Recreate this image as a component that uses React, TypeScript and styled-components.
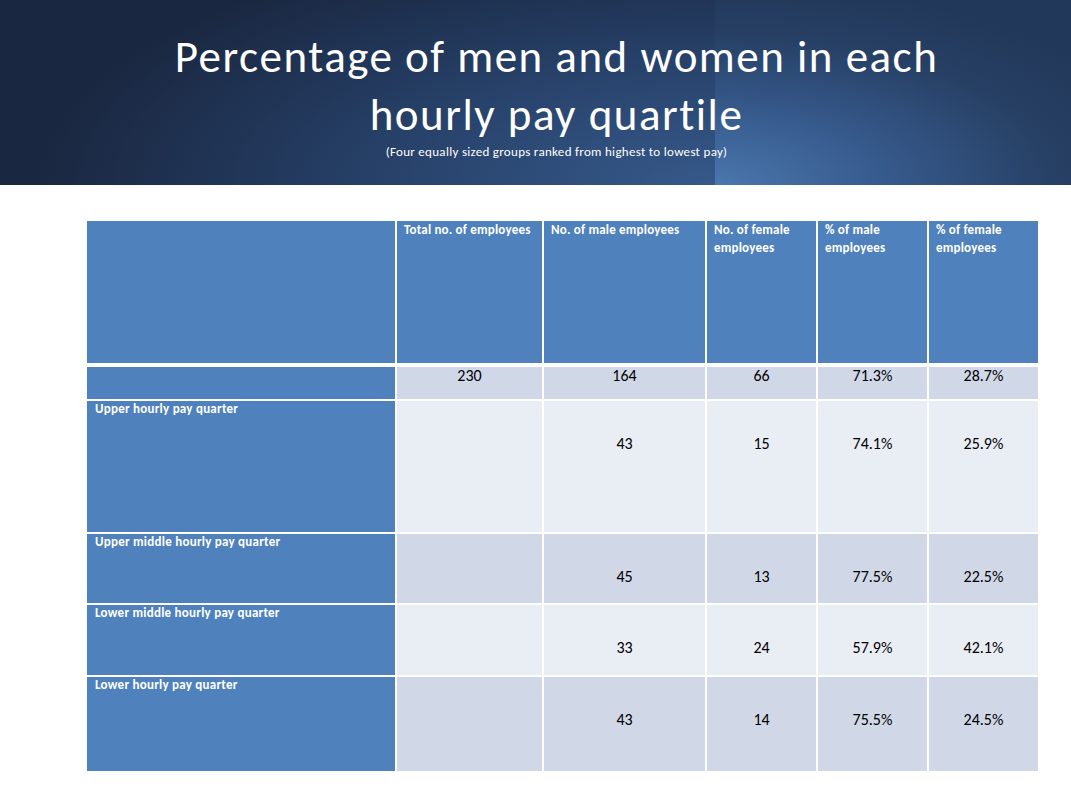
import React from 'react';
import styled, { createGlobalStyle } from 'styled-components';

const GlobalStyle = createGlobalStyle`
  body {
    margin: 0;
    background: #ffffff;
    font-family: Calibri, Carlito, Lato, 'Open Sans', sans-serif;
  }
`;

type Quarter = {
  label: string;
  total: string;
  male: string;
  female: string;
  malePct: string;
  femalePct: string;
  height: number;
};

const columns = [
  'Total no. of employees',
  'No. of male employees',
  'No. of female employees',
  '% of male employees',
  '% of female employees',
];

const rows: Quarter[] = [
  { label: '', total: '230', male: '164', female: '66', malePct: '71.3%', femalePct: '28.7%', height: 32 },
  { label: 'Upper hourly pay quarter', total: '', male: '43', female: '15', malePct: '74.1%', femalePct: '25.9%', height: 131 },
  { label: 'Upper middle hourly pay quarter', total: '', male: '45', female: '13', malePct: '77.5%', femalePct: '22.5%', height: 69 },
  { label: 'Lower middle hourly pay quarter', total: '', male: '33', female: '24', malePct: '57.9%', femalePct: '42.1%', height: 70 },
  { label: 'Lower hourly pay quarter', total: '', male: '43', female: '14', malePct: '75.5%', femalePct: '24.5%', height: 94 },
];

const App: React.FC = () => {
  return (
    <Page>
      <GlobalStyle />
      <Banner>
        <Title>
          Percentage of men and women in each
          <br />
          hourly pay quartile
        </Title>
        <Subtitle>(Four equally sized groups ranked from highest to lowest pay)</Subtitle>
      </Banner>

      <Table>
        <HeadRow>
          <LabelCell />
          {columns.map((c) => (
            <HeadCell key={c}>{c}</HeadCell>
          ))}
        </HeadRow>
        {rows.map((r, i) => (
          <BodyRow key={i} $height={r.height}>
            <LabelCell>{r.label}</LabelCell>
            {[r.total, r.male, r.female, r.malePct, r.femalePct].map((v, j) => (
              <DataCell key={j} $shade={i % 2 === 0} $top={i === 0 ? 0 : 34}>
                {v}
              </DataCell>
            ))}
          </BodyRow>
        ))}
      </Table>
    </Page>
  );
};

const Page = styled.div`
  min-height: 803px;
  background: #ffffff;
`;

const Banner = styled.header`
  height: 185px;
  box-sizing: border-box;
  padding: 28px 0 0 42px;
  text-align: center;
  color: #ffffff;
  background:
    radial-gradient(ellipse 130% 110% at 0% 100%, #4a77ae 0%, #36598b 38%, #263f63 75%, #22385a 100%) right top / 356px 100% no-repeat,
    radial-gradient(ellipse 95% 140% at 100% 100%, #36598a 0%, #2a4670 40%, #213658 70%, #1a2740 100%) left top / calc(100% - 356px) 100% no-repeat;
`;

const Title = styled.h1`
  margin: 0;
  font-weight: 400;
  font-size: 45px;
  line-height: 58px;
  letter-spacing: 1.5px;
`;

const Subtitle = styled.p`
  margin: 0;
  font-size: 13px;
  line-height: 16px;
  letter-spacing: 0.3px;
`;

const Table = styled.div`
  margin: 36px 0 0 87px;
  width: 951px;
  display: flex;
  flex-direction: column;
  gap: 2px;
`;

const gridCols = '308px 145px 161px 109px 109px 109px';

const HeadRow = styled.div`
  display: grid;
  grid-template-columns: ${gridCols};
  column-gap: 2px;
  height: 142px;
  margin-bottom: 2px;
`;

const BodyRow = styled.div<{ $height: number }>`
  display: grid;
  grid-template-columns: ${gridCols};
  column-gap: 2px;
  height: ${(p) => p.$height}px;
`;

const HeadCell = styled.div`
  background: #4f81bd;
  color: #ffffff;
  font-weight: 700;
  font-size: 13px;
  line-height: 18px;
  letter-spacing: 0.2px;
  padding: 0 6px 0 7px;
`;

const LabelCell = styled.div`
  background: #4f81bd;
  color: #ffffff;
  font-weight: 700;
  font-size: 13px;
  line-height: 16px;
  letter-spacing: 0.25px;
  padding: 0 8px;
`;

const DataCell = styled.div<{ $shade: boolean; $top: number }>`
  background: ${(p) => (p.$shade ? '#d0d8e8' : '#e9edf4')};
  color: #000000;
  font-size: 16px;
  line-height: 18px;
  text-align: center;
  padding-top: ${(p) => p.$top}px;
`;

export default App;
